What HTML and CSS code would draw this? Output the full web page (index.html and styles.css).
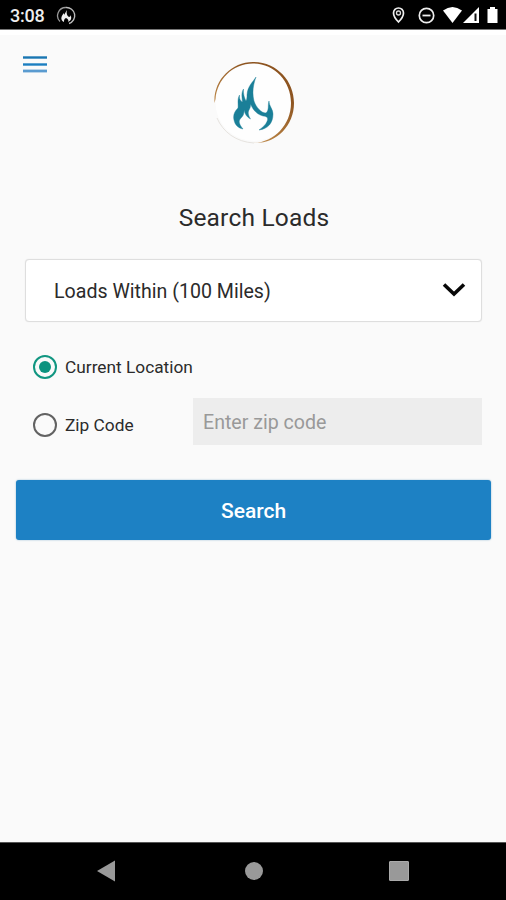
FILE: index.html
```html
<!DOCTYPE html>
<html lang="en">
<head>
<meta charset="utf-8">
<title>Search Loads</title>
<link rel="stylesheet" href="styles.css">
</head>
<body>
<div class="screen">
  <header class="status">
    <span class="clock">3:08</span>
    <svg class="app-icon" width="20" height="20" viewBox="0 0 20 20" fill="none"><path d="M4 15.500A8.2 8.2 0 0 1 10 1.5" stroke="#999" stroke-width="1.3"/><path d="M10 1.5A8.2 8.2 0 0 1 13 17.500" stroke="#bbb" stroke-width="1.4"/><path d="M11 4C10 7 11 10 13 11C14 11 14.500 10 14.500 9C16.500 13 14 15 12 16C13 14 12 13 10 12C8 13 8 14 8 16C4 14 5 10 8 7V9Z" fill="#eee"/></svg>
    <svg class="indicators" width="110" height="30" viewBox="0 0 110 30">
      <path d="M8.5 8A5 5 0 0 0 3.5 13C3.5 17 8.500 22 8.500 22S13.500 17 13.500 13A5 5 0 0 0 8.500 8Z" fill="none" stroke="#eee" stroke-width="1.7"/><circle cx="8.500" cy="13" r="2" fill="none" stroke="#ddd" stroke-width="1.300"/>
      <circle cx="36.500" cy="15.500" r="7.200" fill="none" stroke="#eee" stroke-width="1.700"/><path d="M32.500 15.500H40.500" stroke="#eee" stroke-width="1.800"/>
      <path d="M53 10.500Q62.500 3.500 72 10.500L62.500 23Z" fill="#fff"/>
      <path d="M89 7V23H73Z" fill="#fff"/><path d="M84.500 13.500H86.500V21H84.500Z" fill="#111"/>
      <path d="M97.500 9H100V7H105V9H107.500V23H97.500Z" fill="#fff"/>
    </svg>
  </header>
  <main class="content">
    <div class="top">
      <svg class="menu" width="24" height="18" viewBox="0 0 24 18"><path d="M0 2.500H24" stroke="#1976b2" stroke-width="2.400"/><path d="M0 9.500H24" stroke="#1b7ec0" stroke-width="2.400"/><path d="M0 16H24" stroke="#5a9bd0" stroke-width="2.800"/></svg>
      <svg class="logo" width="100" height="100" viewBox="0 0 100 100">
        <defs><linearGradient id="ring" x1=".2" y1="1" x2=".75" y2=".3"><stop offset="0" stop-color="#d8c9b4"/><stop offset=".35" stop-color="#b98344"/><stop offset="1" stop-color="#8d5420"/></linearGradient></defs>
        <circle cx="50" cy="48.500" r="38.500" fill="#fefefe"/>
        <path d="M10.500 49C9 27 27 8 49 8C73 8 90 27 90 49C90 72 72 90 50 89C70 88 87 71 87 49C87 27 70 9.500 49 9.500C28 9.500 13 26 11.500 45Z" fill="url(#ring)"/>
        <path d="M13 64C19 78 32 88 50 89" fill="none" stroke="#ddd9d2" stroke-width=".7"/>
        <path d="M52 23C49 28 43.500 32 43 41C43 43 43 45 42 47C40.500 44 39 40 39.500 35C37 39 38 44 38.500 48C36.500 47 35 45 35.500 41C33 46 34.500 50 34 54C30 58 29 62 30 66C31 71 34 74 39 75C35 70 34 67 37 64C40 61 40 59 40 56C41 60 42.500 63 46.500 65C44 61 43.500 58 45.500 55C46.500 53 46.500 52 46.500 50C49 56 53 60.500 59 62C63.500 62.500 64.500 64 63 67.500C61.500 71 59 73 55 76C64 75 69 69 69 60C69 55 65 52 65 47C63.500 51 65.500 56 62 59C57 59 52 53 50 47C48 39 49 31 52 23Z" fill="#1a7f98" stroke="#1a7f98" stroke-width=".4"/>
      </svg>
    </div>
    <h1 class="title">Search Loads</h1>
    <div class="select"><span class="value">Loads Within (100 Miles)</span>
      <svg width="24" height="16" viewBox="0 0 24 16" fill="none" stroke="#080808" stroke-width="3.600"><path d="M2 2.500L12 12L22 2.500"/></svg>
    </div>
    <div class="option current"><span class="radio on"></span><span class="label-current">Current Location</span></div>
    <div class="option zip"><span class="radio"></span><span class="label-zip">Zip Code</span><div class="field">Enter zip code</div></div>
    <div class="button">Search</div>
  </main>
  <footer class="nav">
    <svg width="18" height="22" viewBox="0 0 18 22"><path d="M0 11L18 .5V21.500Z" fill="#999"/></svg>
    <span class="home"></span>
    <span class="recent"></span>
  </footer>
</div>
</body>
</html>
```
FILE: styles.css
```css
* { box-sizing: border-box; }
body { margin: 0; font-family: Roboto, "Liberation Sans", sans-serif; color: #2b2b2b; }
.screen { width: 506px; height: 900px; display: flex; flex-direction: column; background: #fafafa; }
.status { height: 30px; background: #000; border-bottom: 1px solid #777; display: flex; align-items: center; padding: 2px 6px 0 10px; color: #eee; }
.clock { font-size: 18px; width: 46px; line-height: 28px; letter-spacing: -.2px; font-weight: 500; }
.indicators { margin-left: auto; margin-top: -1px; }
.content { flex: 1; border-top: 5px solid #fff; }
.top { height: 161px; display: flex; align-items: flex-start; padding-left: 23px; }
.menu { margin-top: 20px; }
.logo { margin: 19px 0 0 157px; }
.title { margin: 0; height: 63px; line-height: 43px; text-align: center; font-size: 24.5px; font-weight: 400; letter-spacing: .2px; padding-left: 2px; }
.select { height: 63px; margin: 0 24px 0 25px; border: 1px solid #dedede; border-radius: 4px; background: #fff; display: flex; align-items: center; justify-content: space-between; padding: 0 15px 0 28px; font-size: 19.6px; box-shadow: 0 0 1px #ddd; }
.value { padding-top: 2px; }
.select svg { margin-top: -2px; }
.option { display: flex; align-items: center; padding-left: 33px; }
.current { height: 47px; margin-top: 21px; }
.zip { height: 47px; margin-top: 8px; }
.radio { width: 24px; height: 24px; border: 2px solid #626262; border-radius: 50%; margin-right: 8px; display: flex; align-items: center; justify-content: center; }
.on { border-color: #119681; }
.on::after { content: ""; width: 12px; height: 12px; border-radius: 50%; background: #0c937f; }
.label-current, .label-zip { font-size: 17.3px; }
.label-zip { width: 128px; }
.zip .radio, .label-zip { position: relative; top: 3px; }
.field { width: 289px; height: 47px; background: #ededed; color: #999; font-size: 19.6px; line-height: 50px; padding-left: 10px; }
.button { height: 60px; margin: 35px 15px 0 16px; border-radius: 3px; background: #1d81c4; color: #fff; text-align: center; font-size: 21px; font-weight: 500; line-height: 62px; box-shadow: 0 0 2px #91b7d1; }
.nav { height: 58px; background: #000; border-top: 1px solid #555; display: flex; align-items: center; padding-left: 97px; }
.nav > * { position: relative; top: -1px; }
.home { width: 18px; height: 18px; border-radius: 50%; background: #999; margin-left: 130px; }
.recent { width: 20px; height: 20px; border-radius: 1px; background: #999; border: 1px solid #aaa; margin-left: 126px; }
```
